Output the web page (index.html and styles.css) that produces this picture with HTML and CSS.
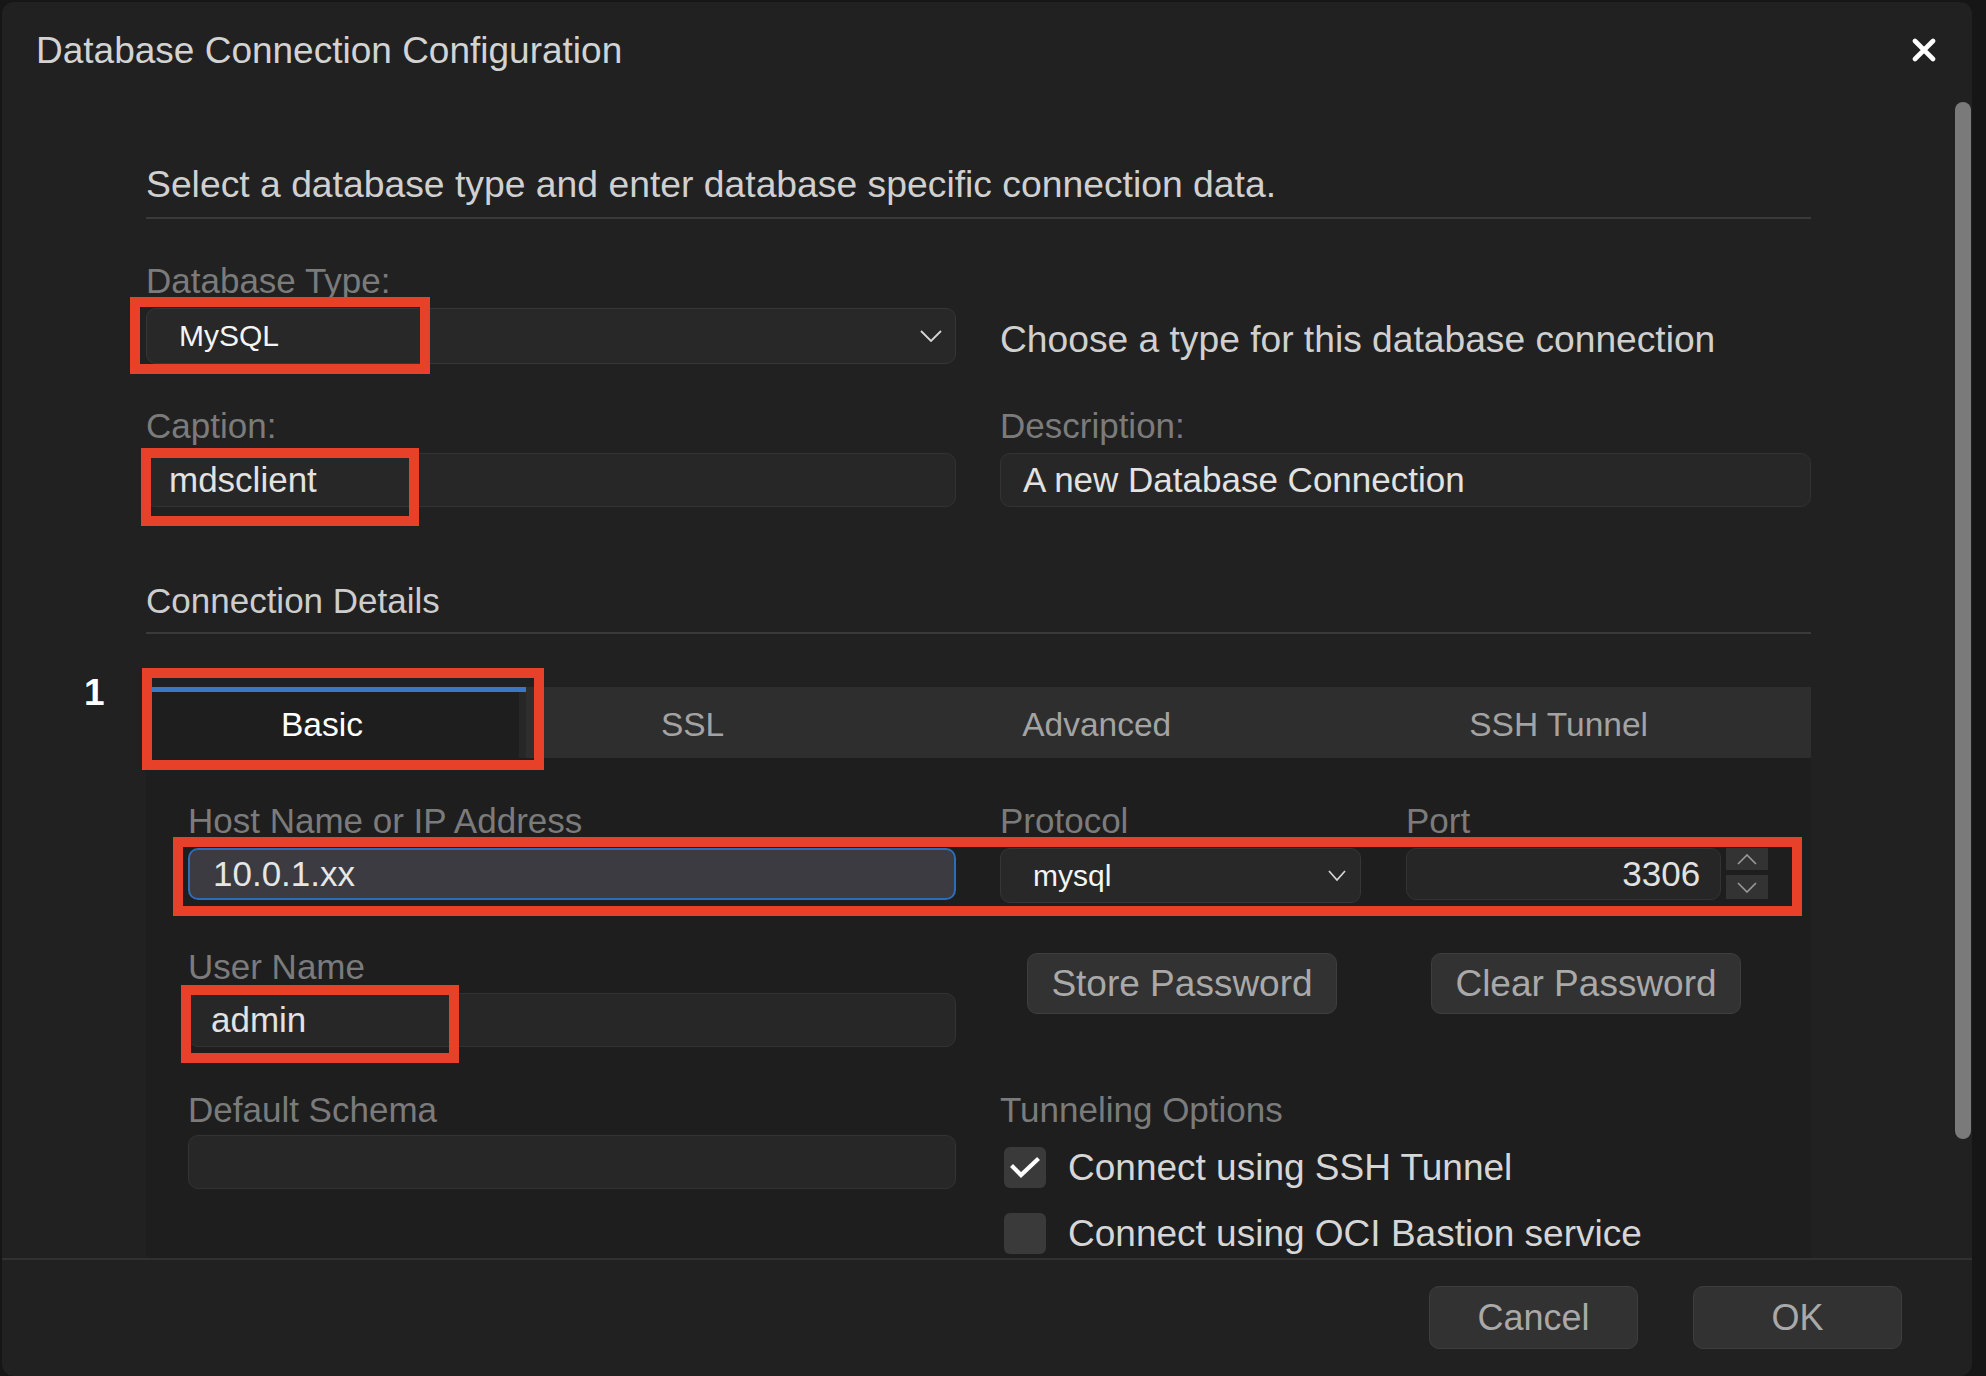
FILE: index.html
```html
<!DOCTYPE html>
<html lang="en">
<head>
<meta charset="utf-8">
<title>Database Connection Configuration</title>
<link rel="stylesheet" href="styles.css">
</head>
<body>
<div class="dialog">
  <header class="dlg-header">
    <h1 class="dlg-title">Database Connection Configuration</h1>
    <button class="close-btn" aria-label="Close">
      <svg width="24" height="24" viewBox="0 0 24 24"><path d="M3 3 L21 21 M21 3 L3 21" stroke="#ffffff" stroke-width="4.6" stroke-linecap="round" fill="none"/></svg>
    </button>
  </header>

  <div class="dlg-body">
    <div class="scroll-content">
      <p class="intro">Select a database type and enter database specific connection data.</p>

      <div class="top-grid">
        <div class="field">
          <label class="lbl">Database Type:</label>
          <div class="select select-big">
            <span>MySQL</span>
            <svg width="22" height="12" viewBox="0 0 22 12"><polyline points="1,1 11,11 21,1" fill="none" stroke="#d6d6d6" stroke-width="1.8"/></svg>
          </div>
        </div>
        <div class="type-hint">Choose a type for this database connection</div>

        <div class="field">
          <label class="lbl">Caption:</label>
          <div class="input">mdsclient</div>
        </div>
        <div class="field">
          <label class="lbl">Description:</label>
          <div class="input">A new Database Connection</div>
        </div>
      </div>

      <h2 class="section">Connection Details</h2>

      <div class="tabs">
        <div class="tab active">Basic</div>
        <div class="tab">SSL</div>
        <div class="tab">Advanced</div>
        <div class="tab">SSH Tunnel</div>
      </div>

      <div class="panel">
        <div class="prow">
          <div class="field">
            <label class="lbl">Host Name or IP Address</label>
            <div class="input input-host">10.0.1.xx</div>
          </div>
          <div class="proto-port">
            <div class="field proto">
              <label class="lbl">Protocol</label>
              <div class="select select-proto">
                <span>mysql</span>
                <svg width="18" height="11" viewBox="0 0 18 11"><polyline points="1,1 9,10 17,1" fill="none" stroke="#d6d6d6" stroke-width="1.7"/></svg>
              </div>
            </div>
            <div class="field port">
              <label class="lbl">Port</label>
              <div class="port-row">
                <div class="input input-port">3306</div>
                <div class="spinner">
                  <div class="spin spin-up"><svg width="20" height="11" viewBox="0 0 20 11"><polyline points="1,10 10,1 19,10" fill="none" stroke="#9a9a9a" stroke-width="1.6"/></svg></div>
                  <div class="spin spin-down"><svg width="20" height="11" viewBox="0 0 20 11"><polyline points="1,1 10,10 19,1" fill="none" stroke="#9a9a9a" stroke-width="1.6"/></svg></div>
                </div>
              </div>
            </div>
          </div>
        </div>

        <div class="prow prow-2">
          <div class="field">
            <label class="lbl lbl-tight">User Name</label>
            <div class="input">admin</div>
          </div>
          <div class="pw-buttons">
            <button class="btn btn-pw">Store Password</button>
            <button class="btn btn-pw">Clear Password</button>
          </div>
        </div>

        <div class="prow prow-3">
          <div class="field">
            <label class="lbl lbl-schema">Default Schema</label>
            <div class="input"></div>
          </div>
          <div class="tunnel">
            <label class="lbl lbl-tunnel">Tunneling Options</label>
            <div class="check-row">
              <span class="checkbox checked">
                <svg width="30" height="22" viewBox="0 0 30 22"><polyline points="3,10 11,18 27,3" fill="none" stroke="#ffffff" stroke-width="4.2" stroke-linecap="square"/></svg>
              </span>
              <span class="check-text">Connect using SSH Tunnel</span>
            </div>
            <div class="check-row check-row-2">
              <span class="checkbox"></span>
              <span class="check-text">Connect using OCI Bastion service</span>
            </div>
          </div>
        </div>
      </div>
    </div>
    <div class="scrollbar"><div class="thumb"></div></div>
  </div>

  <footer class="dlg-footer">
    <button class="btn fbtn">Cancel</button>
    <button class="btn fbtn">OK</button>
  </footer>
</div>

<div class="annot a1"></div>
<div class="annot a2"></div>
<div class="annot a3"></div>
<div class="annot a4"></div>
<div class="annot a5"></div>
<div class="step-num">1</div>
</body>
</html>
```

FILE: styles.css
```css
* {
  box-sizing: border-box;
  margin: 0;
  padding: 0;
}

html, body {
  width: 1986px;
  height: 1376px;
  overflow: hidden;
}

body {
  position: relative;
  background: #161616;
  font-family: "Liberation Sans", Arial, Helvetica, sans-serif;
  color: #d0d0d0;
}

button {
  font-family: inherit;
}

.dialog {
  margin: 2px 0 0 2px;
  width: 1970px;
  height: 1374px;
  background: #212121;
  border-radius: 12px;
  display: flex;
  flex-direction: column;
  overflow: hidden;
}

/* header */
.dlg-header {
  flex: 0 0 100px;
  display: flex;
  justify-content: space-between;
  align-items: flex-start;
  padding: 27px 36px 0 34px;
}

.dlg-title {
  font-size: 37px;
  line-height: 44px;
  font-weight: normal;
  color: #d3d3d3;
}

.close-btn {
  width: 24px;
  height: 24px;
  margin-top: 9px;
  background: none;
  border: 0;
  display: flex;
}

/* body */
.dlg-body {
  flex: 0 0 1156px;
  position: relative;
  overflow: hidden;
}

.scroll-content {
  padding: 60px 0 0 144px;
  width: 1809px;
}

.intro {
  font-size: 37.3px;
  line-height: 44px;
  color: #d0d0d0;
  padding-bottom: 11px;
  border-bottom: 2px solid #3a3a3a;
}

.top-grid {
  margin-top: 42px;
  display: grid;
  grid-template-columns: 810px 811px;
  column-gap: 44px;
  row-gap: 42px;
}

.field {
  display: flex;
  flex-direction: column;
}

.lbl {
  display: block;
  font-size: 35px;
  line-height: 40px;
  color: #7b7b7b;
  margin-bottom: 7px;
}

.lbl-tight {
  margin-bottom: 6px;
}

.lbl-schema {
  margin-bottom: 5px;
}

.select {
  display: flex;
  align-items: center;
  justify-content: space-between;
  background: #282828;
  border: 1.5px solid #363636;
  border-radius: 10px;
  color: #f4f4f4;
  font-size: 30px;
}

.select-big {
  height: 56px;
  padding: 0 13px 0 32px;
}

.select-proto {
  height: 55px;
  padding: 0 14px 0 32px;
}

.type-hint {
  align-self: end;
  height: 56px;
  display: flex;
  align-items: center;
  padding-top: 6px;
  font-size: 37.2px;
  color: #d0d0d0;
}

.input {
  height: 54px;
  display: flex;
  align-items: center;
  padding-left: 22px;
  background: #272727;
  border: 1.5px solid #333333;
  border-radius: 10px;
  font-size: 35px;
  color: #e2e2e2;
}

.section {
  margin-top: 74px;
  font-size: 35px;
  line-height: 40px;
  font-weight: normal;
  color: #cdcdcd;
  padding-bottom: 11px;
  border-bottom: 2px solid #3a3a3a;
}

/* tabs */
.tabs {
  margin-top: 53px;
  display: flex;
  height: 71px;
  background: #2e2e2e;
}

.tab {
  flex: 1 1 auto;
  border-top: 5px solid transparent;
  padding-right: 28px;
  text-align: center;
  font-size: 33.5px;
  line-height: 66px;
  color: #a3a3a3;
}

.tab.active {
  border-top-color: #3a78c6;
  background: #1e1e1e;
  color: #ffffff;
  box-shadow: inset -7px 0 0 #272727;
}

/* panel */
.panel {
  background: #1e1e1e;
  padding: 43px 42px 300px 42px;
}

.prow {
  display: grid;
  grid-template-columns: 768px 769px;
  column-gap: 44px;
  align-items: start;
}

.prow-2 {
  margin-top: 44px;
}

.prow-3 {
  margin-top: 43px;
}

.input-host {
  height: 52px;
  padding-left: 23px;
  background: #3b3b41;
  border: 2px solid #2e6cb8;
  color: #e6e6e6;
}

.proto-port {
  display: flex;
}

.proto {
  width: 361px;
  margin-right: 45px;
}

.port {
  width: 362px;
}

.port-row {
  display: flex;
  gap: 5px;
}

.input-port {
  width: 316px;
  height: 52px;
  justify-content: flex-end;
  padding: 0 20px 0 0;
  font-size: 35px;
  background: #262626;
}

.spinner {
  width: 42px;
  display: flex;
  flex-direction: column;
  gap: 5px;
}

.spin {
  background: #333333;
  display: flex;
  align-items: center;
  justify-content: center;
}

.spin-up {
  height: 22px;
}

.spin-down {
  height: 24px;
}

.pw-buttons {
  margin-top: 6px;
  display: flex;
  justify-content: space-between;
  padding: 0 28px 0 27px;
}

.btn {
  background: #323232;
  border: 1.5px solid #3e3e3e;
  border-radius: 10px;
  color: #a9a9a9;
  font-size: 36px;
}

.btn-pw {
  width: 310px;
  height: 61px;
  font-size: 37px;
}

.lbl-tunnel {
  margin-bottom: 17px;
}

.check-row {
  display: flex;
  align-items: center;
  height: 41px;
  gap: 22px;
  padding-left: 4px;
}

.check-row-2 {
  margin-top: 25px;
}

.checkbox {
  width: 42px;
  height: 41px;
  border-radius: 6px;
  background: #3a3a3a;
  display: flex;
  align-items: center;
  justify-content: center;
  flex: 0 0 auto;
}

.check-text {
  font-size: 37px;
  color: #d6d6d6;
}

/* scrollbar */
.scrollbar {
  position: absolute;
  top: 0;
  right: 1px;
  width: 16px;
  height: 1037px;
}

.thumb {
  width: 100%;
  height: 100%;
  border-radius: 8px;
  background: #7a7a7a;
}

/* footer */
.dlg-footer {
  flex: 1 1 auto;
  border-top: 2px solid #313131;
  display: flex;
  justify-content: flex-end;
  gap: 55px;
  padding: 26px 70px 0 0;
}

.fbtn {
  width: 209px;
  height: 63px;
  align-self: flex-start;
}

/* annotation overlays */
.annot {
  position: absolute;
  border: 10px solid #e8412a;
}

.a1 { left: 130px; top: 297px; width: 300px; height: 77px; }
.a2 { left: 141px; top: 448px; width: 278px; height: 78px; }
.a3 { left: 142px; top: 668px; width: 402px; height: 102px; }
.a4 { left: 173px; top: 837px; width: 1629px; height: 79px; }
.a5 { left: 181px; top: 985px; width: 278px; height: 78px; }

.step-num {
  position: absolute;
  left: 84px;
  top: 674px;
  font-size: 37px;
  line-height: 37px;
  font-weight: bold;
  color: #ffffff;
}
```
